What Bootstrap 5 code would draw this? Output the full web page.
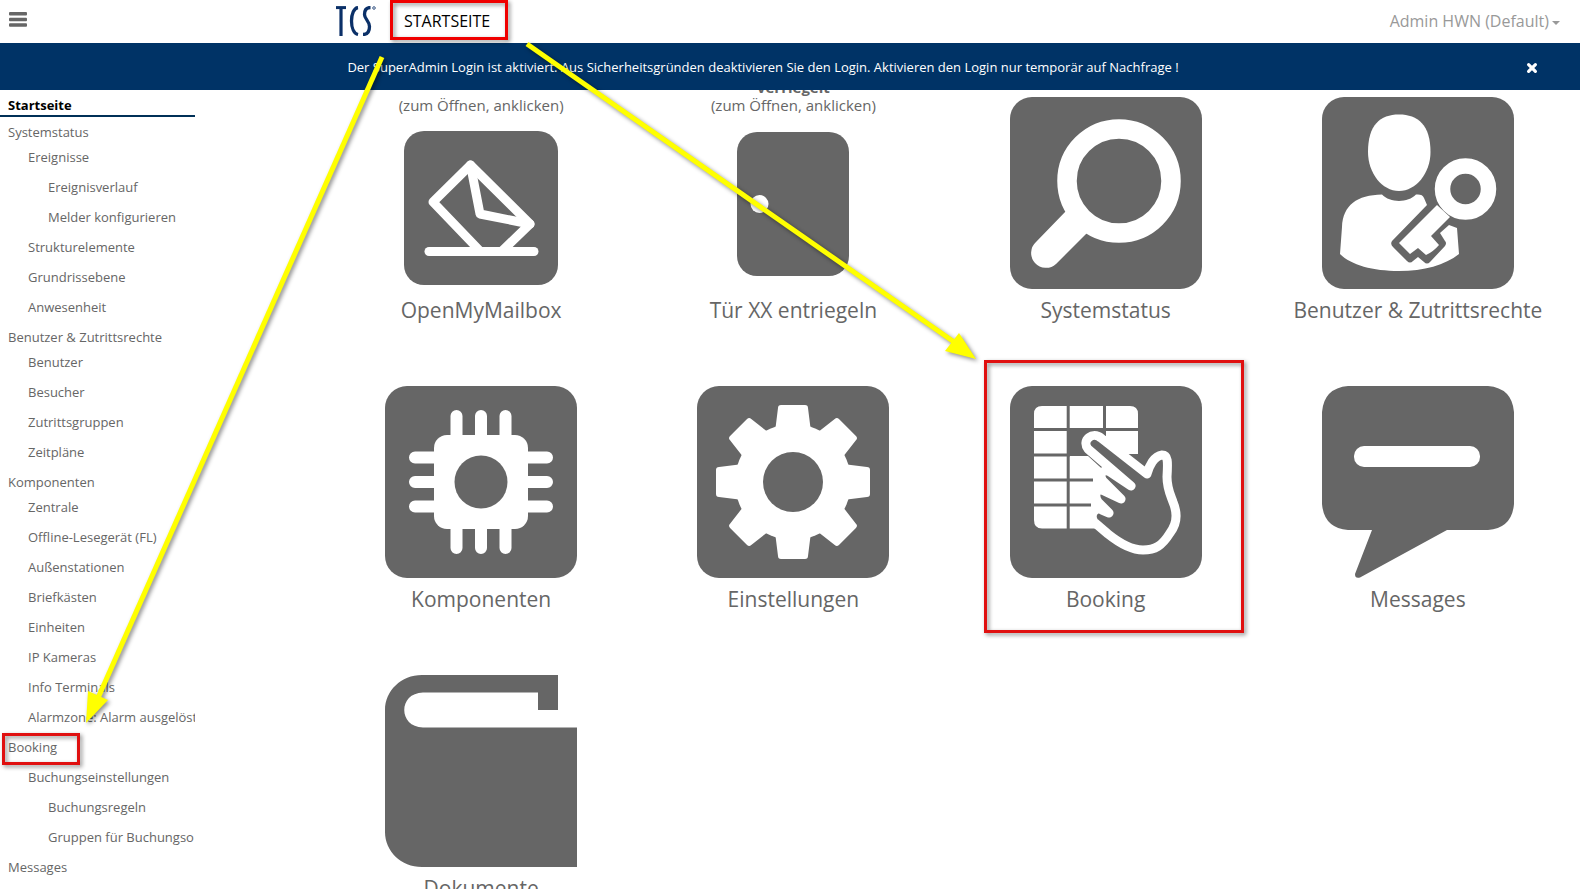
<!DOCTYPE html>
<html lang="de">
<head>
<meta charset="utf-8">
<meta name="viewport" content="width=device-width, initial-scale=1">
<title>TCS Startseite</title>
<link href="https://cdn.jsdelivr.net/npm/bootstrap@5.3.0/dist/css/bootstrap.min.css" rel="stylesheet">
<style>
  :root { --tile: #666; --navy: #036; }
  body { font-family: "Open Sans", "Noto Sans", sans-serif; font-size: 13px; color: #666; background: #fff; }
  a { color: inherit; text-decoration: none; }
  .topbar { height: 43px; padding-bottom: 2px; }
  .menu-btn { width: 36px; height: 41px; padding: 0 9px 2px; }
  .brand-area { margin-left: 300px; }
  .page-title { font-size: 16px; color: #000; margin: 0 0 0 28px; line-height: 24px; font-weight: 400; }
  .user-btn { font-size: 16px; color: #999; line-height: 24px; padding: 0 20px 0 0; gap: 2px; }
  .user-btn::after { content: ""; border: 4px solid transparent; border-top-color: #999; border-bottom: 0; margin: 4px 0 0 1px; }
  .notice { height: 47px; background: var(--navy); color: #fff; padding: 2px 42px 0 0; }
  .side { width: 195px; flex: none; }
  .side-link { display: block; height: 30px; line-height: 30px; white-space: nowrap; overflow: hidden; }
  .side-link.current { height: 27px; padding-top: 3px; line-height: 24px; font-weight: 700; color: #000; border-bottom: 2px solid #003057; }
  .side-link.group { height: 20px; line-height: 20px; margin-top: 5px; }
  .lv0 { padding-left: 8px; }
  .lv1 { padding-left: 28px; }
  .lv2 { padding-left: 48px; }
  .stage { padding: 0 6px 0 130px; }
  /* list is scrolled slightly under the notice bar */
  .tiles { margin-top: -13px; }
  .tile { height: 254px; margin-bottom: 35px; }
  .tile svg { fill: var(--tile); }
  .tile-label { font-size: 21px; line-height: 42px; white-space: nowrap; }
  .tile-state { height: 38px; padding-bottom: 1px; margin-bottom: 16px; font-size: 15px; line-height: 18px; }
  .marks { inset: 0; pointer-events: none; z-index: 10; filter: drop-shadow(2px 2px 2px rgba(0,0,0,.45)); }
</style>
</head>
<body>
<div class="vh-100 d-flex flex-column overflow-hidden position-relative">
  <header class="topbar d-flex align-items-center flex-shrink-0">
    <button type="button" class="menu-btn btn border-0 rounded-0 d-flex align-items-center" aria-label="Menü">
      <svg width="18" height="15" fill="#666"><rect y="0" width="18" height="3.500" rx="1"/><rect y="5.700" width="18" height="3.500" rx="1"/><rect y="11.300" width="18" height="3.500" rx="1"/></svg>
    </button>
    <a href="#" class="brand-area d-flex" aria-label="TCS">
      <svg width="40" height="30" viewBox="0 0 40 30" fill="none" stroke="#0b3068">
        <path d="M0 1.600H10" stroke-width="3"/><path d="M5 1V30" stroke-width="3.200"/>
        <path d="M22 1.500C18 2 15.500 8 15.500 15S18 27.500 22 28.500" stroke-width="3.300"/>
        <path d="M34.500 1.500C30 1.500 28.500 5 28.500 8.500C28.500 13 33.500 15 33.500 20.500C33.500 26 31 28.500 27 28.500" stroke-width="3.300"/>
        <circle cx="38" cy="2" r="1.300" stroke-width=".8"/>
      </svg>
    </a>
    <h1 class="page-title">STARTSEITE</h1>
    <button type="button" class="user-btn btn border-0 ms-auto d-flex align-items-center">Admin HWN (Default)</button>
  </header>

  <div class="notice d-flex align-items-center flex-shrink-0" role="alert">
    <div class="flex-fill text-center">Der SuperAdmin Login ist aktiviert. Aus Sicherheitsgründen deaktivieren Sie den Login. Aktivieren den Login nur temporär auf Nachfrage !</div>
    <button type="button" class="btn p-0 border-0 d-flex" aria-label="Schließen">
      <svg width="12" height="12" viewBox="0 0 12 12" stroke="#fff" stroke-width="3.200" stroke-linecap="round"><path d="M2.600 2.600L9.400 9.400M9.400 2.600L2.600 9.400"/></svg>
    </button>
  </div>

  <div class="d-flex flex-fill overflow-hidden">
    <nav class="side overflow-hidden">
      <a href="#" class="side-link lv0 current">Startseite</a>
      <a href="#" class="side-link lv0 group">Systemstatus</a>
      <a href="#" class="side-link lv1">Ereignisse</a>
      <a href="#" class="side-link lv2">Ereignisverlauf</a>
      <a href="#" class="side-link lv2">Melder konfigurieren</a>
      <a href="#" class="side-link lv1">Strukturelemente</a>
      <a href="#" class="side-link lv1">Grundrissebene</a>
      <a href="#" class="side-link lv1">Anwesenheit</a>
      <a href="#" class="side-link lv0 group">Benutzer &amp; Zutrittsrechte</a>
      <a href="#" class="side-link lv1">Benutzer</a>
      <a href="#" class="side-link lv1">Besucher</a>
      <a href="#" class="side-link lv1">Zutrittsgruppen</a>
      <a href="#" class="side-link lv1">Zeitpläne</a>
      <a href="#" class="side-link lv0 group">Komponenten</a>
      <a href="#" class="side-link lv1">Zentrale</a>
      <a href="#" class="side-link lv1">Offline-Lesegerät (FL)</a>
      <a href="#" class="side-link lv1">Außenstationen</a>
      <a href="#" class="side-link lv1">Briefkästen</a>
      <a href="#" class="side-link lv1">Einheiten</a>
      <a href="#" class="side-link lv1">IP Kameras</a>
      <a href="#" class="side-link lv1">Info Terminals</a>
      <a href="#" class="side-link lv1">Alarmzone: Alarm ausgelöst</a>
      <a href="#" class="side-link lv0">Booking</a>
      <a href="#" class="side-link lv1">Buchungseinstellungen</a>
      <a href="#" class="side-link lv2">Buchungsregeln</a>
      <a href="#" class="side-link lv2">Gruppen für Buchungso</a>
      <a href="#" class="side-link lv0">Messages</a>
    </nav>

    <main class="stage flex-fill overflow-hidden">
      <div class="tiles row row-cols-4 g-0 text-center">
        <div class="col"><a href="#" class="tile d-flex flex-column align-items-center">
          <span class="tile-state d-flex flex-column justify-content-end"><span>(zum Öffnen, anklicken)</span></span>
          <svg width="154" height="154" viewBox="0 0 154 154"><rect width="154" height="154" rx="20"/>
            <g fill="none" stroke="#fff" stroke-width="9" stroke-linecap="round" stroke-linejoin="round"><path d="M25 120.500H130"/><path d="M76 120L29 71L66.500 34L126 93L98 120"/><path d="M66.500 34L76 83L126 93"/></g></svg>
          <span class="tile-label mt-auto">OpenMyMailbox</span></a></div>
        <div class="col"><a href="#" class="tile d-flex flex-column align-items-center">
          <span class="tile-state d-flex flex-column justify-content-end"><b>verriegelt</b><span>(zum Öffnen, anklicken)</span></span>
          <svg width="112" height="146" viewBox="0 0 112 146"><rect y="1" width="112" height="144" rx="20"/><circle cx="22.500" cy="73" r="9" fill="#fff"/></svg>
          <span class="tile-label mt-auto">Tür XX entriegeln</span></a></div>
        <div class="col"><a href="#" class="tile d-flex flex-column align-items-center justify-content-end">
          <svg width="192" height="192" viewBox="0 0 192 192"><rect width="192" height="192" rx="22"/><circle cx="109" cy="84" r="52" fill="none" stroke="#fff" stroke-width="19.500"/><path fill="#fff" d="M56 114L26 145A14.500 14.500 0 0 0 46 167L77 136L80 118L70 107Z"/></svg>
          <span class="tile-label">Systemstatus</span></a></div>
        <div class="col"><a href="#" class="tile d-flex flex-column align-items-center justify-content-end">
          <svg width="192" height="192" viewBox="0 0 192 192"><rect width="192" height="192" rx="22"/>
            <g fill="#fff"><path d="M77 17.500C96 17.500 108.500 28 108.500 55C108.500 76 94 94 77 94S46 76 46 55C46 28 58 17.500 77 17.500Z"/>
            <path d="M60 97.500C68 106 86 106 94 97.500C98 97 101 98 102 101L105 108L70 144Q68 147 71 150L85 164Q88 167 91 164L96 160L102 165Q105 168 108 165L123 149Q125 146 123 144L118 136L127 128L135 131L137 157C123 168 102 174 77 174C51 174 29 168 18 157L20 130C21 108 35 98 60 97.500Z"/></g>
            <path d="M115 108L77 146L88 157L96 151L104 158Q111 155 117 148L109 139L128 120" fill="#fff"/>
            <circle cx="143.500" cy="92" r="23" stroke="#fff" stroke-width="15.500"/></svg>
          <span class="tile-label">Benutzer &amp; Zutrittsrechte</span></a></div>

        <div class="col"><a href="#" class="tile d-flex flex-column align-items-center justify-content-end">
          <svg width="192" height="192" viewBox="0 0 192 192"><rect width="192" height="192" rx="22"/>
            <g fill="#fff"><rect x="49" y="49" width="94" height="94" rx="13"/></g>
            <path d="M71.500 30V162M96 30V162M120.500 30V162M30 71.500H162M30 96H162M30 120.500H162" stroke="#fff" stroke-width="12" stroke-linecap="round"/><circle cx="96" cy="96" r="26.500"/></svg>
          <span class="tile-label">Komponenten</span></a></div>
        <div class="col"><a href="#" class="tile d-flex flex-column align-items-center justify-content-end">
          <svg width="192" height="192" viewBox="0 0 192 192"><rect width="192" height="192" rx="22"/>
            <g fill="#fff"><circle cx="96" cy="96" r="58"/>
              <g><path id="tooth" d="M78 46L81 22Q81 19 84 19H108Q111 19 111 22L114 46V146L111 170Q111 173 108 173H84Q81 173 81 170L78 146Z"/>
              <use href="#tooth" transform="rotate(45 96 96)"/><use href="#tooth" transform="rotate(90 96 96)"/><use href="#tooth" transform="rotate(135 96 96)"/></g></g><circle cx="96" cy="96" r="30"/></svg>
          <span class="tile-label">Einstellungen</span></a></div>
        <div class="col"><a href="#" class="tile d-flex flex-column align-items-center justify-content-end">
          <svg width="192" height="192" viewBox="0 0 192 192"><rect width="192" height="192" rx="22"/>
            <path fill="#fff" d="M32 20H120Q128 20 128 28V68H96V70H78L100 90L86 142.500H32Q24 142.500 24 134V28Q24 20 32 20Z"/>
            <path d="M58.200 20V143M94.500 20V50M24 43.500H128M24 69H60M24 94H83M24 119H81" stroke="#666" stroke-width="3"/><path d="M58 43H95V70H58Z"/>
            <path d="M91 52L137 88C139 80 144 70 152 69C158 69 158 75 157 91C157 103 161 110 163 116C168 128 167 138 160 147C152 160 145 164 133 164C120 164 108 156 98 148L84 136C79 128 86 120 92 124L99 127L88 116C83 108 88 101 94 105L111 113L93 95C88 88 94 82 100 86L121 100L78 63C71 54 83 45 91 52Z" stroke="#fff" stroke-width="9" stroke-linejoin="round"/></svg>
          <span class="tile-label">Booking</span></a></div>
        <div class="col"><a href="#" class="tile d-flex flex-column align-items-center justify-content-end">
          <svg width="192" height="192" viewBox="0 0 192 192"><path d="M26 0H166Q190 2 192 26V118Q190 142 166 144H125L38 191.500Q33 193 33 188L50 144H26Q2 142 0 118V26Q2 2 26 0Z"/><rect x="32" y="60" width="126" height="21" rx="10" fill="#fff"/></svg>
          <span class="tile-label">Messages</span></a></div>

        <div class="col"><a href="#" class="tile d-flex flex-column align-items-center justify-content-end">
          <svg width="192" height="192" viewBox="0 0 192 192"><path d="M37 0H173V35H153V17.500H38C13 18 13 52 38 52.500H192V192H37C16 192 0 176 0 157V35C0 16 16 0 37 0Z"/></svg>
          <span class="tile-label">Dokumente</span></a></div>
      </div>
    </main>
  </div>

  <!-- tutorial callouts lying over the page -->
  <svg class="marks position-absolute w-100 h-100" aria-hidden="true">
    <g fill="none" stroke="#e01010" stroke-width="3">
      <rect x="391.500" y="1.500" width="115" height="37" stroke="#f00000"/><rect x="3.500" y="734.500" width="75" height="29"/><rect x="985.500" y="361.500" width="257" height="270"/>
    </g>
    <g stroke="#ff0" stroke-width="5" fill="#ff0"><path d="M382 57L98 698"/><path d="M527 44L957 344"/>
    <path stroke="none" d="M86 723L88 691L108 700Z"/><path stroke="none" d="M976 359L945 351L959 333Z"/></g>
  </svg>
</div>
<script src="https://cdn.jsdelivr.net/npm/bootstrap@5.3.0/dist/js/bootstrap.bundle.min.js"></script>
</body>
</html>
